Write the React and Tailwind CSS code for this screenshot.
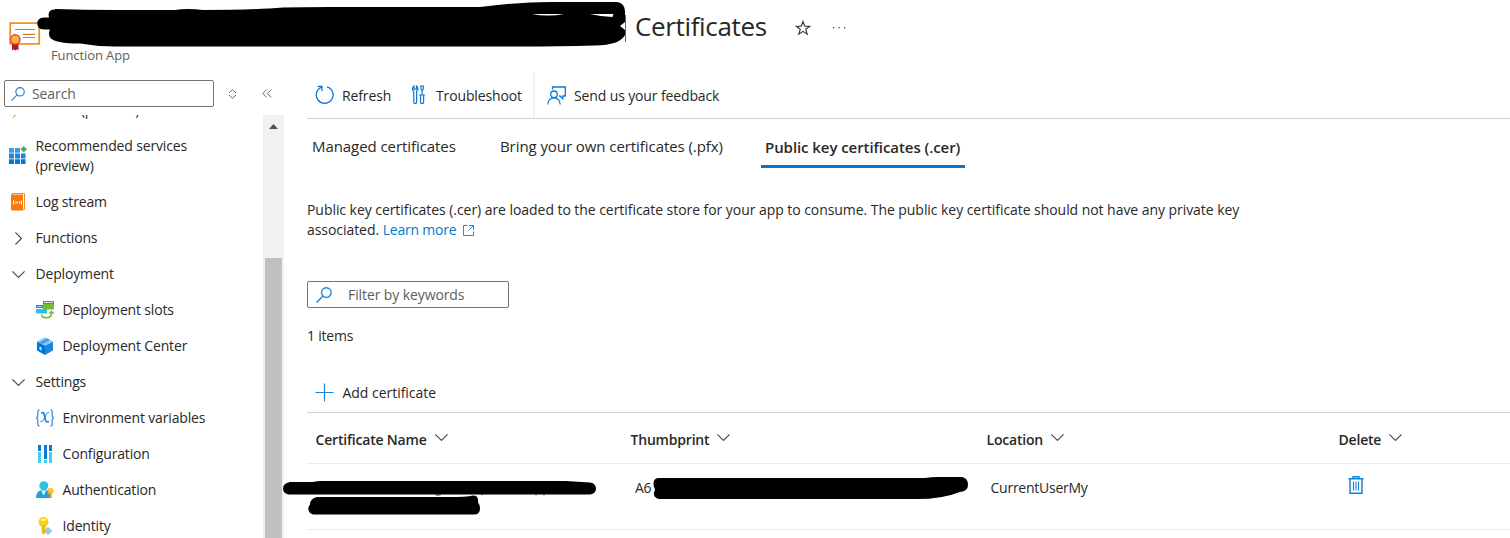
import { useState } from 'react'

const Icon = ({ size = 18, className = '', children }) => (
  <svg width={size} height={size} viewBox="0 0 18 18" fill="none" className={`shrink-0 ${className}`}>
    {children}
  </svg>
)

const BoltIcon = () => (
  <Icon>
    <path d="M11 0 3 9h5l-5 9L15 7h-5l3-7z" fill="#f9a825" />
  </Icon>
)

const ServicesIcon = () => (
  <Icon className="overflow-visible">
    <path d="M0 1h5v4.800H0zM6 1h5v4.800H6z" fill="#3f9be3" />
    <path d="M0 6.600h5v4.800H0zM6 6.600h5v4.800H6zM12 6.600h4.500v4.800H12z" fill="#1a86dc" />
    <path d="M0 12.200h5V17H0zM6 12.200h5V17H6zM12 12.200h4.500V17H12z" fill="#0078d4" />
    <path d="m14.700-1 3.300 3.300-3.300 3.300-3.300-3.300z" fill="#4caf50" />
  </Icon>
)

const LogIcon = () => (
  <Icon>
    <path d="M3 .5h12.500v16H3z" fill="#fff" stroke="#f78d1e" />
    <path d="M2 1.500h12v16H3a1 1 0 0 1-1-1z" fill="#f57c0a" />
    <path d="M4.500 7.500v4M6.500 8q1.500 1.500 0 3M8 9.500h1M11 8q-1.500 1.500 0 3M12.500 7.500v4" stroke="#fff" />
  </Icon>
)

const SlotsIcon = () => (
  <Icon>
    <path d="M0 4h7v3H0z" fill="#1787c7" />
    <path d="M1 5h5v1H1z" fill="#9fdcf4" />
    <path d="M0 8h11v4.500H0z" fill="#32bedd" />
    <path d="M7 0h11v8.500H7z" fill="#76bc2d" />
    <path d="M7 0h11v3H7z" fill="#5e9624" />
    <path d="M8 1h9v1H8z" fill="#d8efc0" />
    <path d="M5.500 13.500c1 4.500 9 4.500 10-.5v-2M13.200 12.500l2.300-2 2.300 2" stroke="#76bc2d" strokeWidth="1.500" />
  </Icon>
)

const BoxIcon = () => (
  <Icon>
    <path d="m1 4.500 8 4V18l-8-4.500z" fill="#0078d4" />
    <path d="M17 4.500 9 8.500V18l8-4.500z" fill="#1f86e0" />
    <path d="m9 .3 8 4.200-8 4-8-4z" fill="#83c5f7" />
    <path d="m11.500 1.600-8 4.100 2.300 1.200 8-4.100z" fill="#3a96e6" />
    <path d="m3.500 9.500 2 1v3l-2-1z" fill="#d3ebff" />
  </Icon>
)

const VariablesIcon = () => (
  <Icon>
    <path d="M3.500 1Q1.800 1 1.800 3v4.500L.5 9l1.300 1.500V15q0 2 1.700 2M14.500 1q1.700 0 1.700 2v4.500L17.500 9l-1.300 1.500V15q0 2-1.700 2" stroke="#3a96e2" strokeWidth="1.300" />
    <path d="M5.200 4.200c2.600-1.700 3.100.6 3.700 4.300s1.500 5.600 3.900 3.800" stroke="#1579cf" strokeWidth="1.600" />
    <path d="M13.200 3.800c-2.200-1-3.200 1.900-4.400 4.500s-2.200 5.200-4.400 4" stroke="#1579cf" />
  </Icon>
)

const ConfigIcon = () => (
  <Icon>
    <path d="M2 0h3v6H2zM8 0h3v14H8zM13 0h3v6h-3z" fill="#0f78d4" />
    <path d="M2 7h3v11H2zM8 15h3v3H8zM13 7h3v11h-3z" fill="#3fd0ee" />
  </Icon>
)

const AuthIcon = () => (
  <Icon>
    <path d="M0 17c.3-5 1.500-8 8-8s7.500 3 7.500 8z" fill="#1fa5cf" />
    <path d="m5.500 9.500 2.200 5 2.200-5z" fill="#fff" />
    <circle cx="7.800" cy="4.800" r="4.500" fill="#32bedd" />
    <circle cx="14.500" cy="10" r="3" fill="#fdb813" />
    <path d="M13.500 12h2v4.500l-1 1-1-1z" fill="#f3a30c" />
    <circle cx="14.500" cy="9" r=".8" fill="#fff" />
  </Icon>
)

const IdentityIcon = () => (
  <Icon>
    <circle cx="7.500" cy="5" r="5" fill="#fcd116" />
    <path d="M5.500 8h4v7.500l-2 2.300-2-2z" fill="#f4b90f" />
    <path d="M5.500 2h4v1.800h-4z" fill="#fff8d0" />
    <path d="m12 10 4 4-4 4-4-4z" fill="#7fb8d3" />
    <circle cx="12" cy="14" r="1.700" fill="none" stroke="#e3f3fa" strokeWidth=".7" />
  </Icon>
)

const ChevronDown = ({ className = '' }) => (
  <svg width="13" height="7" viewBox="0 0 13 7" fill="none" stroke="#444" strokeWidth="1.100" className={`shrink-0 ${className}`}>
    <path d="m.4.400 6.100 6 6.100-6" />
  </svg>
)

const SearchIcon = ({ size = 15 }) => (
  <svg width={size} height={size} viewBox="0 0 15 15" fill="none" stroke="#1a80d6" strokeWidth="1.200" className="shrink-0">
    <circle cx="9.700" cy="5.200" r="4.500" />
    <path d="M6.500 8.500.5 14.500" />
  </svg>
)

const CertificateIcon = () => (
  <svg width="32" height="30" viewBox="0 0 32 30" fill="none" className="shrink-0">
    <path d="M1.200 1.200h29v20.600h-29z" fill="#fff" stroke="#ee9420" strokeWidth="1.800" />
    <path d="M6 7.500h20M14 12.300h12M14 15.500h12" stroke="#e07a22" strokeWidth="1.200" />
    <path d="M3 20h6.500v8.500l-1.500-1.200-1.700 1.200-1.700-1.200L3 28.500z" fill="#b51b1e" />
    <circle cx="6.200" cy="17.500" r="4.700" fill="#ffb24a" stroke="#e8413a" strokeWidth="1.500" />
  </svg>
)

const navItems = [
  { label: 'Recommended services (preview)', icon: ServicesIcon, tall: true },
  { label: 'Log stream', icon: LogIcon },
  { label: 'Functions', group: true, closed: true },
  { label: 'Deployment', group: true },
  { label: 'Deployment slots', icon: SlotsIcon, child: true },
  { label: 'Deployment Center', icon: BoxIcon, child: true },
  { label: 'Settings', group: true },
  { label: 'Environment variables', icon: VariablesIcon, child: true },
  { label: 'Configuration', icon: ConfigIcon, child: true },
  { label: 'Authentication', icon: AuthIcon, child: true },
  { label: 'Identity', icon: IdentityIcon, child: true },
]

const tabs = [
  { label: 'Managed certificates', style: 'w-[188px]' },
  { label: 'Bring your own certificates (.pfx)', style: 'w-[265px]' },
  { label: 'Public key certificates (.cer)', style: 'w-[204px]' },
]

function NavItem({ item }) {
  const Glyph = item.icon
  return (
    <a className={`flex items-center shrink-0 ${item.tall ? 'h-14' : 'h-9'} ${item.child ? 'pl-9' : 'pl-[9px]'}`}>
      {item.group ? (
        <span className="w-[18px] flex justify-center">
          <ChevronDown className={item.closed ? '-rotate-90' : ''} />
        </span>
      ) : (
        <Glyph />
      )}
      <span className="ml-[8.5px] w-[170px] leading-5">{item.label}</span>
    </a>
  )
}

function Sidebar() {
  return (
    <aside className="w-[284px] shrink-0 flex flex-col pt-2 tracking-[-0.16px]">
      <div className="flex items-center pl-1 h-[27px] shrink-0">
        <div className="w-[210px] h-[27px] border border-[#767676] rounded-[2px] flex items-center pl-[6px] gap-[7px] tracking-[-0.1px] text-[#605e5c]">
          <SearchIcon size={14} />
          <span>Search</span>
        </div>
        <svg width="9" height="10" viewBox="0 0 9 10" fill="none" stroke="#666" className="ml-[14px]">
          <path d="M1 4 4.500.7 8 4M1 6l3.500 3.300L8 6" />
        </svg>
        <svg width="10" height="9" viewBox="0 0 10 9" fill="none" stroke="#666" className="ml-[25px]">
          <path d="M4.700.5.700 4.500l4 4M9.300.5l-4 4 4 4" />
        </svg>
      </div>

      <div className="flex flex-1 min-h-0 mt-2">
        <nav className="flex-1 overflow-hidden flex flex-col">
          <div className="-mt-[23px] shrink-0">
            <NavItem item={{ label: 'Events (preview)', icon: BoltIcon }} />
          </div>
          {navItems.map(item => <NavItem key={item.label} item={item} />)}
        </nav>

        {/* Scrollbar */}
        <div className="w-[21px] bg-[#f1f1f1] flex flex-col items-center">
          <svg width="9" height="5" viewBox="0 0 9 5" className="mt-[9px]">
            <path d="M4.500 0 9 5H0z" fill="#505050" />
          </svg>
          <div className="mt-[129px] w-[17px] flex-1 bg-[#c1c1c1]" />
        </div>
      </div>
    </aside>
  )
}

function Toolbar() {
  return (
    <div className="flex items-stretch h-[47px] border-b border-[#d0d0d0] tracking-[-0.13px]">
      <button className="flex items-center pl-2 w-[104px]">
        <svg width="20" height="20" viewBox="0 0 20 20" fill="none" stroke="#0f78d4" strokeWidth="1.300">
          <path d="M12 1.800a8.400 8.400 0 1 1-5.500.3M2.500 1.300H7V6" />
        </svg>
        <span className="ml-[7px]">Refresh</span>
      </button>
      <button className="flex items-center w-[122px] pl-px">
        <svg width="13" height="20" viewBox="0 0 13 20" fill="none" stroke="#0f78d4" strokeWidth="1.200">
          <path d="M2 1C0 2 0 5.500 1.800 6.500v10.500c0 2.200 2.800 2.200 2.800 0V6.500C6.400 5.500 6.400 2 4.500 1v3.200H2z" />
          <path d="M8.700 1h2.800l-.4 3.500-1 1.200-1-1.200zM10.100 5.700V10M7 10h6M8.600 10v7.200c0 1.800 3 1.800 3 0V10" />
        </svg>
        <span className="ml-[11px]">Troubleshoot</span>
      </button>
      <button className="flex items-center pl-3 border-l-2 border-[#f3f2f1]">
        <svg width="19" height="19" viewBox="0 0 19 19" fill="none" stroke="#0f78d4" strokeWidth="1.300">
          <path d="M5.500 3.500V1h12.800v9h-2.500v2.800l-2.800-2.800h-1" />
          <circle cx="7" cy="8.300" r="3.300" />
          <path d="M.8 18.500c.4-9 12-9 12.400 0" />
        </svg>
        <span className="ml-[8px]">Send us your feedback</span>
      </button>
    </div>
  )
}

const HeaderCell = ({ label }) => (
  <div className="flex items-center font-semibold gap-2 tracking-[-0.2px]">
    <span>{label}</span>
    <ChevronDown className="-mt-1" />
  </div>
)

function CertificateTable() {
  return (
    <div className="border-t border-[#d0d0d0]">
      <div className="grid grid-cols-[315px_356px_352px_1fr] pl-[8.5px] h-[51px] pt-[3px] items-center border-b border-[#edebe9]">
        <HeaderCell label="Certificate Name" />
        <HeaderCell label="Thumbprint" />
        <HeaderCell label="Location" />
        <HeaderCell label="Delete" />
      </div>
      <div className="relative grid grid-cols-[315px_356px_352px_1fr] pl-[13px] h-[66px] pt-[14px] border-b border-[#edebe9] leading-5 tracking-[-0.25px]">
        <span />
        <span>A6</span>
        <span className="-ml-[0.5px]">CurrentUserMy</span>
        <svg width="16" height="18" viewBox="0 0 16 18" fill="none" stroke="#0f82d8" className="ml-[5px] -mt-[2px]">
          <path d="M.5 2.700h15M5 2.500V.7h6v1.800M2 3v14.300h12V3" strokeWidth="1.400" />
          <path d="M5.500 5.500v9M8 5.500v9M10.500 5.500v9" strokeWidth="1.100" />
        </svg>

        {/* Covered values */}
        <svg width="690" height="56" viewBox="283 470 690 56" className="absolute -left-6 top-[6px]">
          <path d="M435 494.500q3 1.500 6 0M481 495l3-2M536 493v2.500M544 493v2.500" stroke="#444" fill="none" />
          <path d="M289 482h24q4-1 8-1h245l24 1.500a6 6 0 0 1 0 12H289a6 6 0 0 1 0-12z" />
          <path d="M317 497h130q20 0 26-1.500 6 0 5 7 2 2 2 6 0 6-6 6H313a6 6 0 0 1-3-10q0-6 7-7.500z" />
          <path d="M658 478h267q6-1 12-1h25q6 1 6 8 0 6-8 7-20 8-50 7H659q-6-1-5-7 2-2 0-5-2-8 4-9z" />
        </svg>
      </div>
    </div>
  )
}

export default function App() {
  const [activeTab, setActiveTab] = useState(2)

  return (
    <div className="relative h-[538px] w-[1510px] overflow-hidden bg-white flex flex-col text-[14px] tracking-[-0.1px] text-[#292827] font-['Open_Sans','Noto_Sans',sans-serif]">
      {/* Header */}
      <header className="relative h-[72px] shrink-0 flex pl-[9px]">
        <div className="pt-[22px] w-[42px]">
          <CertificateIcon />
        </div>
        <div className="pt-[46px] w-[574px] text-[13px] leading-[18px] text-[#605e5c]">Function App</div>
        <h1 className="pt-2 text-[26px] leading-9 flex tracking-[-0.35px]">
          <span className="relative z-10 w-[10px] mt-[7px] h-[27px] border-l border-[#45678a]" />
          <span>Certificates</span>
        </h1>
        <svg width="16" height="16" viewBox="0 0 16 16" fill="none" stroke="#333" strokeWidth="1.100" className="mt-5 ml-7">
          <path d="m8 1.500 1.700 4.700h5l-4 3 1.500 5L8 11.300l-4.200 2.900 1.500-5-4-3h5z" />
        </svg>
        <svg width="14" height="2" viewBox="0 0 14 2" className="mt-[27px] ml-[21px]" fill="#444">
          <path d="M1 0h1.300v1.300H1zM6.500 0h1.300v1.300H6.500zM12 0h1.300v1.300H12z" />
        </svg>
        <svg width="600" height="50" viewBox="30 0 600 50" className="absolute left-[30px] top-0">
          <path d="M55 9q30 1 60 1h60q12-2 28 0 50 0 80-2.500Q300 7 330 7h150q40-5 70-5h67q8 1 8 10v23q-5 10-30 10.500-40 1-70 1H115q-18 0-35-3-25 0-30-6-2-4 0-8h-6c-9 0-9-12 0-12h5q-2-8 6-8z" />
          <path d="M532 14h32q-16 3-32 0zM590 14h23.500l-1 3q-12-.5-22.500-3z" fill="#fff" />
          <path d="m625 22-5 4 5 4z" fill="#fff" />
        </svg>
      </header>

      <div className="flex flex-1 min-h-0">
        <Sidebar />
        <main className="flex-1 min-w-0 pl-[23px]">
          <Toolbar />

          {/* Tabs */}
          <div className="flex h-[49px] pl-px text-[15px] tracking-[-0.07px]">
            {tabs.map((tab, i) => (
              <button key={tab.label} onClick={() => setActiveTab(i)}
                className={`${tab.style} h-full px-1 text-left whitespace-nowrap border-b-[3px] ${
                  activeTab === i ? 'border-[#0078d4] font-semibold pt-[10px]' : 'border-transparent pt-2'
                }`}>
                {tab.label}
              </button>
            ))}
          </div>

          <p className="mt-8 w-[960px] leading-5 tracking-[-0.055px]">
            Public key certificates (.cer) are loaded to the certificate store for your app to consume. The public key certificate should not have any private key<br />
            associated. <a className="text-[#0078d4] tracking-[-0.2px]">Learn more
              <svg width="11" height="11" viewBox="0 0 11 11" fill="none" stroke="#2b88d8" className="inline ml-[6px] -mt-[2px]">
                <path d="M4.500.5h-4v10h10v-4M6 .5h4.500V5M10.500.5l-5 5" />
              </svg>
            </a>
          </p>

          <div className="mt-[41px] w-[202px] h-[27px] border border-[#767676] rounded-[2px] flex items-center pl-2 gap-4 text-[#605e5c]">
            <SearchIcon size={16} />
            <span>Filter by keywords</span>
          </div>

          <div className="mt-[18px] leading-5 tracking-[-0.2px]">1 items</div>

          <button className="flex items-center h-[38px] mt-[27px] mb-px pl-2 gap-[8.5px] tracking-[-0.03px]">
            <svg width="19" height="19" viewBox="0 0 19 19" stroke="#1a80d6" strokeWidth="1.200">
              <path d="M9.500.5v18M.5 9.500h18" />
            </svg>
            <span>Add certificate</span>
          </button>

          <CertificateTable />
        </main>
      </div>
    </div>
  )
}
